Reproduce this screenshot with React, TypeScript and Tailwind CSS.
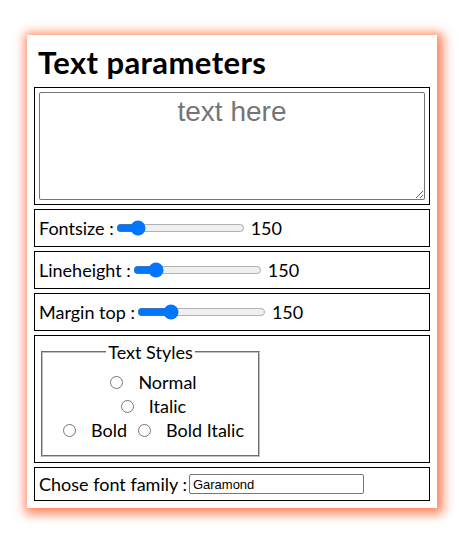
import React from "react";

const font = { fontFamily: "Lato, 'Noto Sans', sans-serif" };

function SliderRow({ label, value }: { label: string; value: number }) {
  return (
    <div className="flex h-[38px] items-center border border-black px-[4px] text-[18px] text-black">
      <span className="whitespace-pre">{label} :</span>
      <input
        type="range"
        min={0}
        max={100}
        defaultValue={value}
        className="mx-[2px] w-[129px]"
      />
      <span className="ml-[4px]">150</span>
    </div>
  );
}

function Radio({ label }: { label: string }) {
  return (
    <label className="flex items-center">
      <input type="radio" name="style" className="h-[13px] w-[13px]" />
      <span className="ml-[15px]">{label}</span>
    </label>
  );
}

export default function App() {
  return (
    <div className="min-h-[534px] bg-white pl-[27px] pt-[35px]" style={font}>
      <div className="flex w-[410px] flex-col gap-[4px] bg-white px-[7px] pb-[7px] shadow-[2px_2px_10px_4px_rgba(255,100,50,0.8)]">
        <h1 className="mt-[7px] mb-[1px] pl-[4px] text-[31px] font-bold leading-[40px] tracking-[0.4px] text-black">
          Text parameters
        </h1>
        <div className="border border-black p-[4px]">
          <textarea
            placeholder="text here"
            className="block h-[108px] w-full rounded-[2px] border border-[#767676] px-[2px] pt-[3px] text-center text-[28px] leading-[32px] text-black placeholder:text-[#757575]"
            style={{ fontFamily: "'Liberation Sans', Arial, sans-serif" }}
          />
        </div>
        <SliderRow label="Fontsize" value={13} />
        <SliderRow label="Lineheight" value={13} />
        <SliderRow label="Margin top" value={23} />
        <div className="h-[128px] border border-black px-[4px] pt-[5px] pb-[4px]">
          <fieldset className="mx-[2px] w-[219px] border-2 border-[#c0c0c0] [border-style:groove] px-[10px] pb-[13px] text-[18px] text-black">
            <legend className="mx-auto px-[2px] leading-[22px]">Text Styles</legend>
            <div className="mt-[7px] flex flex-col items-center pl-[6px] leading-[24px]">
              <Radio label="Normal" />
              <Radio label="Italic" />
              <div className="flex items-center gap-[11px]">
                <Radio label="Bold" />
                <Radio label="Bold Italic" />
              </div>
            </div>
          </fieldset>
        </div>
        <div className="flex h-[34px] items-center border border-black px-[4px] text-[18px] text-black">
          <span>Chose font family :</span>
          <input
            type="text"
            defaultValue="Garamond"
            className="ml-[2px] h-[20px] w-[175px] rounded-[2px] border border-[#767676] px-[3px] text-[13px] text-black"
            style={{ fontFamily: "'Liberation Sans', Arial, sans-serif" }}
          />
        </div>
      </div>
    </div>
  );
}
